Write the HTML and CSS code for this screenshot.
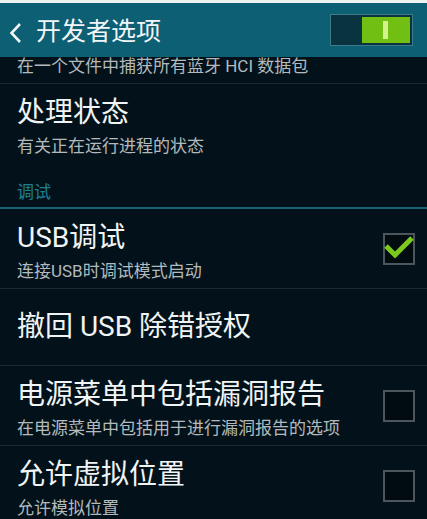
FILE: index.html
```html
<!DOCTYPE html>
<html>
<head>
  <title>开发者选项</title>
  <link rel="stylesheet" href="styles.css">
</head>
<body>
  <div class="status-strip"></div>
  <div class="header">
    <svg class="back-icon" width="14" height="22" viewBox="0 0 14 22">
      <path d="M12 2 L3.5 11 L12 20" fill="none" stroke="#eef3f4" stroke-width="2.6"/>
    </svg>
    <h1>开发者选项</h1>
    <div class="master-switch">
      <span class="switch-off"></span>
      <span class="switch-on"><span class="switch-lever"></span></span>
    </div>
  </div>

  <div class="pref-list">
    <div class="pref-scroll">
      <!-- row scrolled mostly under the header: only its summary shows -->
      <div class="pref partial">
        <div class="pref-text">
          <div class="pref-summary">在一个文件中捕获所有蓝牙 HCI 数据包</div>
        </div>
      </div>
      <div class="pref no-divider">
        <div class="pref-text">
          <div class="pref-title">处理状态</div>
          <div class="pref-summary">有关正在运行进程的状态</div>
        </div>
      </div>

      <div class="pref-category">调试</div>

      <div class="pref">
        <div class="pref-text">
          <div class="pref-title">USB调试</div>
          <div class="pref-summary">连接USB时调试模式启动</div>
        </div>
        <div class="checkbox">
          <svg width="28" height="28" viewBox="0 0 28 28">
            <path d="M1 11 L10 20 L27 3" fill="none" stroke="#7bc91d" stroke-width="5"/>
          </svg>
        </div>
      </div>
      <div class="pref single">
        <div class="pref-text">
          <div class="pref-title">撤回 USB 除错授权</div>
        </div>
      </div>
      <div class="pref">
        <div class="pref-text">
          <div class="pref-title">电源菜单中包括漏洞报告</div>
          <div class="pref-summary">在电源菜单中包括用于进行漏洞报告的选项</div>
        </div>
        <div class="checkbox"></div>
      </div>
      <div class="pref">
        <div class="pref-text">
          <div class="pref-title">允许虚拟位置</div>
          <div class="pref-summary">允许模拟位置</div>
        </div>
        <div class="checkbox"></div>
      </div>
    </div>
  </div>
</body>
</html>
```

FILE: styles.css
```css
html, body {
  margin: 0;
  padding: 0;
}
body {
  width: 427px;
  height: 519px;
  overflow: hidden;
  background-color: #03121a;
  font-family: Roboto, "Noto Sans CJK SC", sans-serif;
  color: #eef2f3;
}
.status-strip {
  height: 3px;
  background-color: #eef2f2;
}
.header {
  position: relative;
  z-index: 1;
  height: 54px;
  display: flex;
  align-items: center;
  padding: 0 14px 0 8px;
  background-color: #0d5f74;
}
.back-icon {
  margin-top: 6px;
}
.header h1 {
  margin: 0 0 0 14px;
  font-size: 25px;
  font-weight: 400;
  line-height: 30px;
  padding-top: 3px;
  color: #f3f6f7;
}
.master-switch {
  margin-left: auto;
  width: 83px;
  height: 32px;
  box-sizing: border-box;
  display: flex;
  padding: 2px;
  border: 1px solid #3d7b8a;
  background-color: #0a3340;
}
.switch-off {
  flex-grow: 1;
}
.switch-on {
  width: 48px;
  display: flex;
  align-items: center;
  justify-content: center;
  background-color: #70bf12;
}
.switch-lever {
  width: 5px;
  height: 18px;
  margin-right: 2px;
  background-color: #d2f28c;
}
.pref-list {
  height: 462px;
  overflow: hidden;
}
.pref-scroll {
  margin-top: -53px;
}
.pref {
  height: 80px;
  box-sizing: border-box;
  display: flex;
  align-items: flex-start;
  padding: 0 12px 0 17px;
  border-bottom: 1px solid #1a2a31;
}
.pref.no-divider {
  border-bottom: none;
}
.pref.single {
  height: 77px;
  align-items: center;
}
.pref-text {
  flex-grow: 1;
  padding-top: 10px;
}
.pref.partial .pref-text {
  padding-top: 48px;
}
.pref.single .pref-text {
  padding-top: 0;
}
.pref-title {
  font-size: 28px;
  line-height: 38px;
  color: #f1f4f5;
  white-space: nowrap;
}
.pref-summary {
  font-size: 17px;
  line-height: 28px;
  color: #b3babd;
  white-space: nowrap;
}
.pref-category {
  height: 45px;
  box-sizing: border-box;
  padding: 0 0 3px 17px;
  display: flex;
  align-items: flex-end;
  font-size: 17px;
  line-height: 24px;
  color: #1f7f92;
  border-bottom: 2px solid #1b6474;
}
.checkbox {
  width: 32px;
  height: 32px;
  box-sizing: border-box;
  margin-top: 24px;
  border: 2px solid #4b575c;
  background-color: #020b10;
}
.checkbox svg {
  display: block;
  overflow: visible;
}
```
